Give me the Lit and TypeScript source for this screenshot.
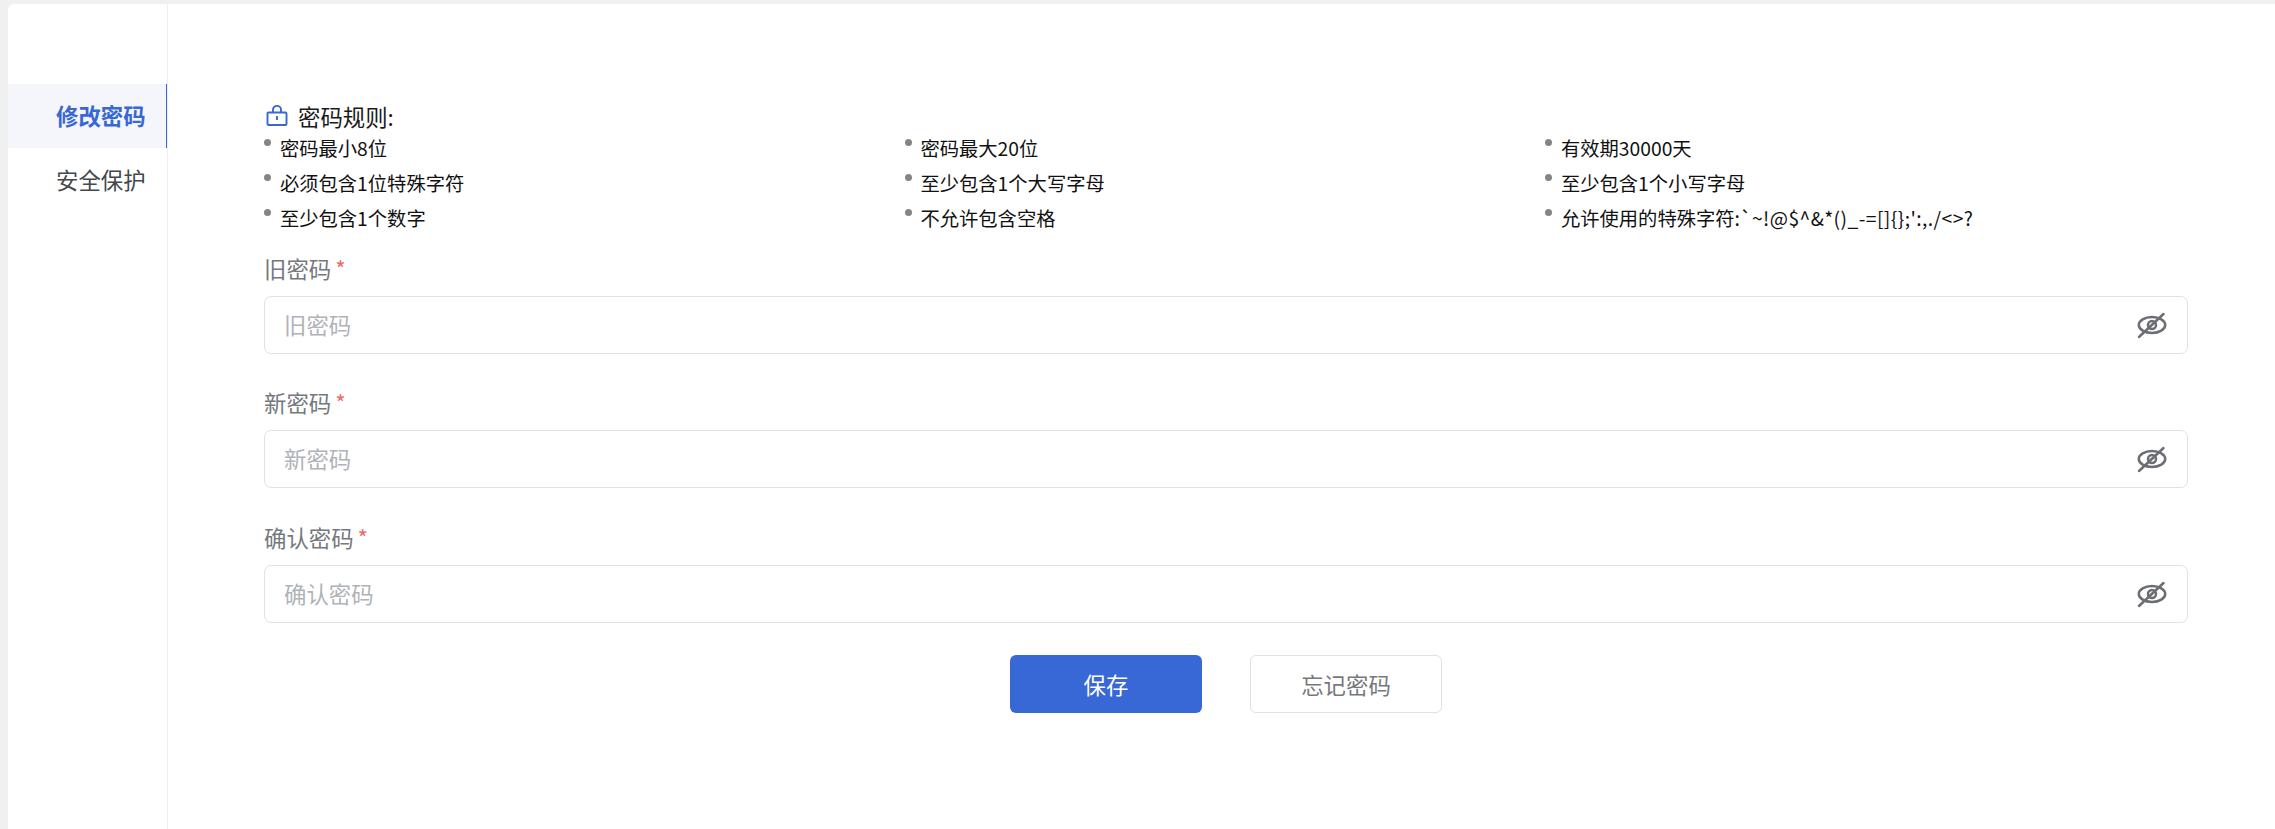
import { LitElement, html, css, svg } from "lit";
import { customElement } from "lit/decorators.js";

const rules: [string, string?][] = [
  ["密码最小8位"], ["密码最大20位"], ["有效期30000天"],
  ["必须包含1位特殊字符"], ["至少包含1个大写字母"], ["至少包含1个小写字母"],
  ["至少包含1个数字"], ["不允许包含空格"], ["允许使用的特殊字符:", "`~!@$^&*()_-=[]{};':,./<>?"],
];
const fields = ["旧密码", "新密码", "确认密码"];

const eye = svg`<svg class="eye" viewBox="0 0 30 30" width="30" height="30" fill="none" stroke="#6b6e73" stroke-width="2.5">
  <ellipse cx="15" cy="15" rx="13.2" ry="8"/>
  <circle cx="15" cy="15" r="4"/>
  <path d="M2 27 L26.5 4" stroke-linecap="round"/>
</svg>`;

const lock = svg`<svg viewBox="0 0 24 24" width="24" height="24" fill="none" stroke="#3867d6" stroke-width="1.9">
  <rect x="2.5" y="8.5" width="19" height="12.5" rx="1"/>
  <path d="M8 8.5 V5.5 A4 3.6 0 0 1 16 5.5 V8.5"/>
  <path d="M12 12 V16"/>
</svg>`;

@customElement("app-root")
export class AppRoot extends LitElement {
  static styles = css`
    :host {
      display: block;
      height: 829px;
      overflow: hidden;
      background: #f0f0f0;
      padding: 4px 0 0 8px;
      box-sizing: border-box;
      font-family: "Noto Sans CJK SC", "Liberation Sans", sans-serif;
    }
    .page {
      display: flex;
      height: 825px;
      background: #fff;
      border-radius: 6px 0 0 0;
    }
    .side {
      width: 160px;
      flex: none;
      border-right: 1px solid #eeeeee;
      padding-top: 80px;
      box-sizing: border-box;
    }
    .item {
      height: 64px;
      line-height: 62px;
      width: 159px;
      box-sizing: border-box;
      padding-left: 48px;
      font-size: 22.4px;
      color: #44474c;
    }
    .item.on {
      background: #f5f6fc;
      color: #3867d6;
      font-weight: 700;
      border-right: 1px solid #3867d6;
    }
    .main {
      flex: 1;
      padding: 98px 87px 0 96px;
      min-width: 0;
    }
    .title {
      display: flex;
      align-items: center;
      height: 28px;
      font-size: 22.4px;
      color: #1a1a1a;
    }
    .title svg { margin-right: 9px; margin-left: 1px; }
    .rules {
      display: grid;
      grid-template-columns: repeat(3, 640.5px);
      margin: 0;
      padding: 0;
      list-style: none;
    }
    .rules li {
      display: flex;
      height: 35px;
      align-items: center;
      font-size: 19.3px;
      color: #111;
      white-space: nowrap;
    }
    .dot {
      width: 7px;
      height: 7px;
      border-radius: 50%;
      background: #858585;
      margin-right: 9px;
      position: relative;
      top: -5px;
    }
    .symbols { letter-spacing: 0.42px; }
    .form { margin-top: 15px; }
    .field { height: 134.4px; }
    .label {
      height: 46px;
      line-height: 36px;
      font-size: 22.4px;
      color: #75787d;
    }
    .star {
      color: #ef6b6b;
      margin-left: 4px;
      font-size: 22.4px;
      line-height: 1;
    }
    .input {
      height: 58px;
      box-sizing: border-box;
      border: 1px solid #e1e2e6;
      border-radius: 7px;
      display: flex;
      align-items: center;
      justify-content: space-between;
      padding: 0 20px 0 19px;
      font-size: 22.4px;
      color: #b0b3b8;
    }
    .input span { margin-bottom: 2px; }
    .btns {
      display: flex;
      justify-content: center;
      gap: 48px;
      margin-top: 2px;
    }
    .btn {
      width: 192px;
      height: 58px;
      box-sizing: border-box;
      border-radius: 6px;
      display: flex;
      align-items: center;
      justify-content: center;
      font-size: 22.4px;
    }
    .primary { background: #3867d6; color: #fff; }
    .plain { border: 1px solid #e1e2e6; color: #75787d; }
  `;

  render() {
    return html`<div class="page">
      <aside class="side">
        <div class="item on">修改密码</div>
        <div class="item">安全保护</div>
      </aside>
      <main class="main">
        <div class="title">${lock}<span>密码规则:</span></div>
        <ul class="rules">
          ${rules.map(
            ([r, s]) => html`<li><span class="dot"></span>${r}${s ? html`<span class="symbols">${s}</span>` : ""}</li>`
          )}
        </ul>
        <div class="form">
          ${fields.map(
            (f) => html`<div class="field">
              <div class="label">${f}<span class="star">*</span></div>
              <div class="input"><span>${f}</span>${eye}</div>
            </div>`
          )}
        </div>
        <div class="btns">
          <div class="btn primary">保存</div>
          <div class="btn plain">忘记密码</div>
        </div>
      </main>
    </div>`;
  }
}
